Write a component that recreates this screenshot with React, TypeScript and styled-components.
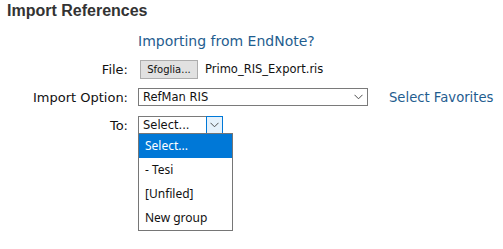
import React from 'react'
import styled, { createGlobalStyle } from 'styled-components'

const GlobalStyle = createGlobalStyle`
  body {
    margin: 0;
    background: #ffffff;
    font-family: 'DejaVu Sans', Verdana, sans-serif;
  }
`

const Chevron: React.FC = () => (
  <svg width="9" height="6" viewBox="0 0 9 6">
    <polyline points="0.5,0.8 4.5,4.8 8.5,0.8" fill="none" stroke="#4d4d4d" strokeWidth="1" />
  </svg>
)

const toOptions = ['Select...', '- Tesi', '[Unfiled]', 'New group']

const App: React.FC = () => {
  return (
    <Page>
      <GlobalStyle />
      <Title>Import References</Title>
      <Form>
        <Label />
        <Link size={14}>Importing from EndNote?</Link>

        <Label>File:</Label>
        <FileCell>
          <BrowseButton>Sfoglia...</BrowseButton>
          <FileName>Primo_RIS_Export.ris</FileName>
        </FileCell>

        <Label>Import Option:</Label>
        <OptionCell>
          <SelectBox width={230}>
            <SelectText>RefMan RIS</SelectText>
            <Arrow>
              <Chevron />
            </Arrow>
          </SelectBox>
          <Link size={13.2}>Select Favorites</Link>
        </OptionCell>

        <Label>To:</Label>
        <ToCell>
          <SelectBox width={85}>
            <SelectText>Select...</SelectText>
            <Arrow active>
              <Chevron />
            </Arrow>
          </SelectBox>
          <DropList>
            {toOptions.map((option, i) => (
              <DropItem key={option} selected={i === 0}>
                {option}
              </DropItem>
            ))}
          </DropList>
        </ToCell>
      </Form>
    </Page>
  )
}

const Page = styled.div`
  width: 503px;
  height: 249px;
  overflow: hidden;
`

const Title = styled.h2`
  margin: 0;
  padding: 1px 0 7px 7px;
  font-family: 'Liberation Sans', Arial, sans-serif;
  font-size: 16px;
  line-height: 19px;
  font-weight: bold;
  color: #333333;
`

const Form = styled.div`
  display: grid;
  grid-template-columns: 128px 1fr;
  grid-auto-rows: 28px;
  column-gap: 10px;
  align-items: center;
`

const Label = styled.div`
  text-align: right;
  font-size: 13px;
  color: #111111;
`

const Link = styled.a<{ size: number }>`
  font-size: ${(p) => p.size}px;
  color: #1f5d8f;
  text-decoration: none;
  cursor: pointer;
  white-space: nowrap;
`

const FileCell = styled.div`
  display: flex;
  align-items: center;
  gap: 7px;
  padding-left: 2px;
`

const BrowseButton = styled.button`
  height: 19px;
  width: 58px;
  padding: 0;
  background: #e1e1e1;
  border: 1px solid #adadad;
  border-radius: 0;
  font-family: 'DejaVu Sans', Verdana, sans-serif;
  font-size: 10px;
  color: #111111;
`

const FileName = styled.span`
  font-size: 11.5px;
  color: #111111;
`

const OptionCell = styled.div`
  display: flex;
  align-items: center;
  gap: 21px;
`

const ToCell = styled.div`
  position: relative;
  display: flex;
  align-items: center;
`

const SelectBox = styled.div<{ width: number }>`
  box-sizing: border-box;
  width: ${(p) => p.width}px;
  height: 18px;
  display: flex;
  align-items: stretch;
  background: #ffffff;
  border: 1px solid #7a7a7a;
`

const SelectText = styled.span`
  flex: 1;
  padding-left: 4px;
  font-size: 11.5px;
  line-height: 16px;
  color: #111111;
  white-space: nowrap;
  overflow: hidden;
`

const Arrow = styled.span<{ active?: boolean }>`
  box-sizing: border-box;
  width: 17px;
  margin: ${(p) => (p.active ? '-1px -1px -1px 0' : '0')};
  display: flex;
  align-items: center;
  justify-content: center;
  background: ${(p) => (p.active ? '#e5f1fb' : 'transparent')};
  border: ${(p) => (p.active ? '1px solid #0078d7' : 'none')};
`

const DropList = styled.div`
  position: absolute;
  top: calc(100% - 1px);
  left: 0;
  box-sizing: border-box;
  width: 95px;
  background: #ffffff;
  border: 1px solid #767676;
  z-index: 2;
`

const DropItem = styled.div<{ selected: boolean }>`
  height: 24px;
  line-height: 24px;
  padding-left: 6px;
  font-family: 'Noto Sans', 'Segoe UI', sans-serif;
  font-size: 12px;
  color: ${(p) => (p.selected ? '#ffffff' : '#111111')};
  background: ${(p) => (p.selected ? '#0078d7' : 'transparent')};
  white-space: nowrap;
`

export default App
